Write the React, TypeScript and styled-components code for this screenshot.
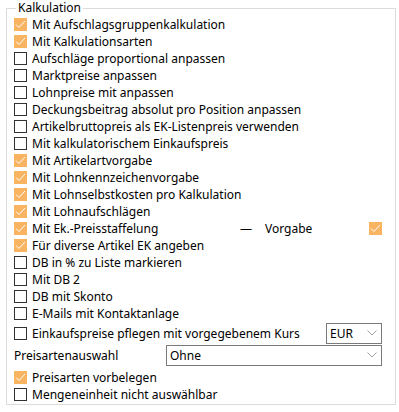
import React from "react";
import styled, { createGlobalStyle } from "styled-components";

const GlobalStyle = createGlobalStyle`
  html, body {
    margin: 0;
    padding: 0;
    background: #ffffff;
  }
  body {
    font-family: "Noto Sans", "Liberation Sans", sans-serif;
    font-size: 12px;
    color: #000;
  }
`;

type Option = { label: string; checked: boolean };

const options: Option[] = [
  { label: "Mit Aufschlagsgruppenkalkulation", checked: true },
  { label: "Mit Kalkulationsarten", checked: true },
  { label: "Aufschläge proportional anpassen", checked: false },
  { label: "Marktpreise anpassen", checked: false },
  { label: "Lohnpreise mit anpassen", checked: false },
  { label: "Deckungsbeitrag absolut pro Position anpassen", checked: false },
  { label: "Artikelbruttopreis als EK-Listenpreis verwenden", checked: false },
  { label: "Mit kalkulatorischem Einkaufspreis", checked: false },
  { label: "Mit Artikelartvorgabe", checked: true },
  { label: "Mit Lohnkennzeichenvorgabe", checked: true },
  { label: "Mit Lohnselbstkosten pro Kalkulation", checked: true },
  { label: "Mit Lohnaufschlägen", checked: true },
];

const moreOptions: Option[] = [
  { label: "Für diverse Artikel EK angeben", checked: true },
  { label: "DB in % zu Liste markieren", checked: false },
  { label: "Mit DB 2", checked: false },
  { label: "DB mit Skonto", checked: false },
  { label: "E-Mails mit Kontaktanlage", checked: false },
];

const Group = styled.fieldset`
  margin: 0 3px 0 6px;
  padding: 0 13px 1px 7px;
  border: 1px solid #dcdcdc;
  min-width: 0;
`;

const Legend = styled.legend`
  margin-left: 2px;
  padding: 0 2px;
  line-height: 16px;
  height: 16px;
`;

const Row = styled.div<{ $tall?: boolean; $gapTop?: number }>`
  display: flex;
  align-items: center;
  height: ${(p) => (p.$tall ? 22 : 17)}px;
  margin-top: ${(p) => p.$gapTop ?? 0}px;
  white-space: nowrap;
`;

const Box = styled.span<{ $checked: boolean }>`
  flex: 0 0 auto;
  box-sizing: border-box;
  width: 13px;
  height: 13px;
  border: 1px solid ${(p) => (p.$checked ? "#f9b461" : "#333333")};
  background: ${(p) => (p.$checked ? "#f9b461" : "#ffffff")};
  display: flex;
  align-items: center;
  justify-content: center;
`;

const Label = styled.span<{ $width?: number }>`
  margin-left: 5px;
  ${(p) => (p.$width ? `width: ${p.$width}px;` : "")}
`;

const Dash = styled.span`
  width: 25px;
`;

const Spacer = styled.span`
  flex: 1;
`;

const PlainLabel = styled.span`
  width: 152px;
`;

const Select = styled.div<{ $width?: number }>`
  box-sizing: border-box;
  height: 21px;
  ${(p) => (p.$width ? `width: ${p.$width}px;` : "flex: 1;")}
  border: 1px solid #7a7a7a;
  display: flex;
  align-items: center;
  padding: 0 4px 0 3px;
  background: #fff;
`;

const SelectText = styled.span`
  flex: 1;
`;

const Check = () => (
  <svg width="11" height="9" viewBox="0 0 11 9">
    <path d="M1 4.5 L4 7.5 L10 1" fill="none" stroke="#ffffff" strokeWidth="1" />
  </svg>
);

const Chevron = () => (
  <svg width="10" height="6" viewBox="0 0 10 6">
    <path d="M0.5 0.5 L5 5 L9.5 0.5" fill="none" stroke="#a0a0a0" strokeWidth="1" />
  </svg>
);

const CheckBox: React.FC<{ checked: boolean }> = ({ checked }) => (
  <Box $checked={checked}>{checked && <Check />}</Box>
);

const OptionRow: React.FC<Option> = ({ label, checked }) => (
  <Row>
    <CheckBox checked={checked} />
    <Label>{label}</Label>
  </Row>
);

const App: React.FC = () => {
  return (
    <>
      <GlobalStyle />
      <Group>
        <Legend>Kalkulation</Legend>
        {options.map((o) => (
          <OptionRow key={o.label} {...o} />
        ))}
        <Row>
          <CheckBox checked={true} />
          <Label $width={208}>Mit Ek.-Preisstaffelung</Label>
          <Dash>—</Dash>
          <span>Vorgabe</span>
          <Spacer />
          <CheckBox checked={true} />
        </Row>
        {moreOptions.map((o) => (
          <OptionRow key={o.label} {...o} />
        ))}
        <Row $tall>
          <CheckBox checked={false} />
          <Label>Einkaufspreise pflegen mit vorgegebenem Kurs</Label>
          <Spacer />
          <Select $width={56}>
            <SelectText>EUR</SelectText>
            <Chevron />
          </Select>
        </Row>
        <Row $tall>
          <PlainLabel>Preisartenauswahl</PlainLabel>
          <Select>
            <SelectText>Ohne</SelectText>
            <Chevron />
          </Select>
        </Row>
        <Row $gapTop={3}>
          <CheckBox checked={true} />
          <Label>Preisarten vorbelegen</Label>
        </Row>
        <OptionRow label="Mengeneinheit nicht auswählbar" checked={false} />
      </Group>
    </>
  );
};

export default App;
